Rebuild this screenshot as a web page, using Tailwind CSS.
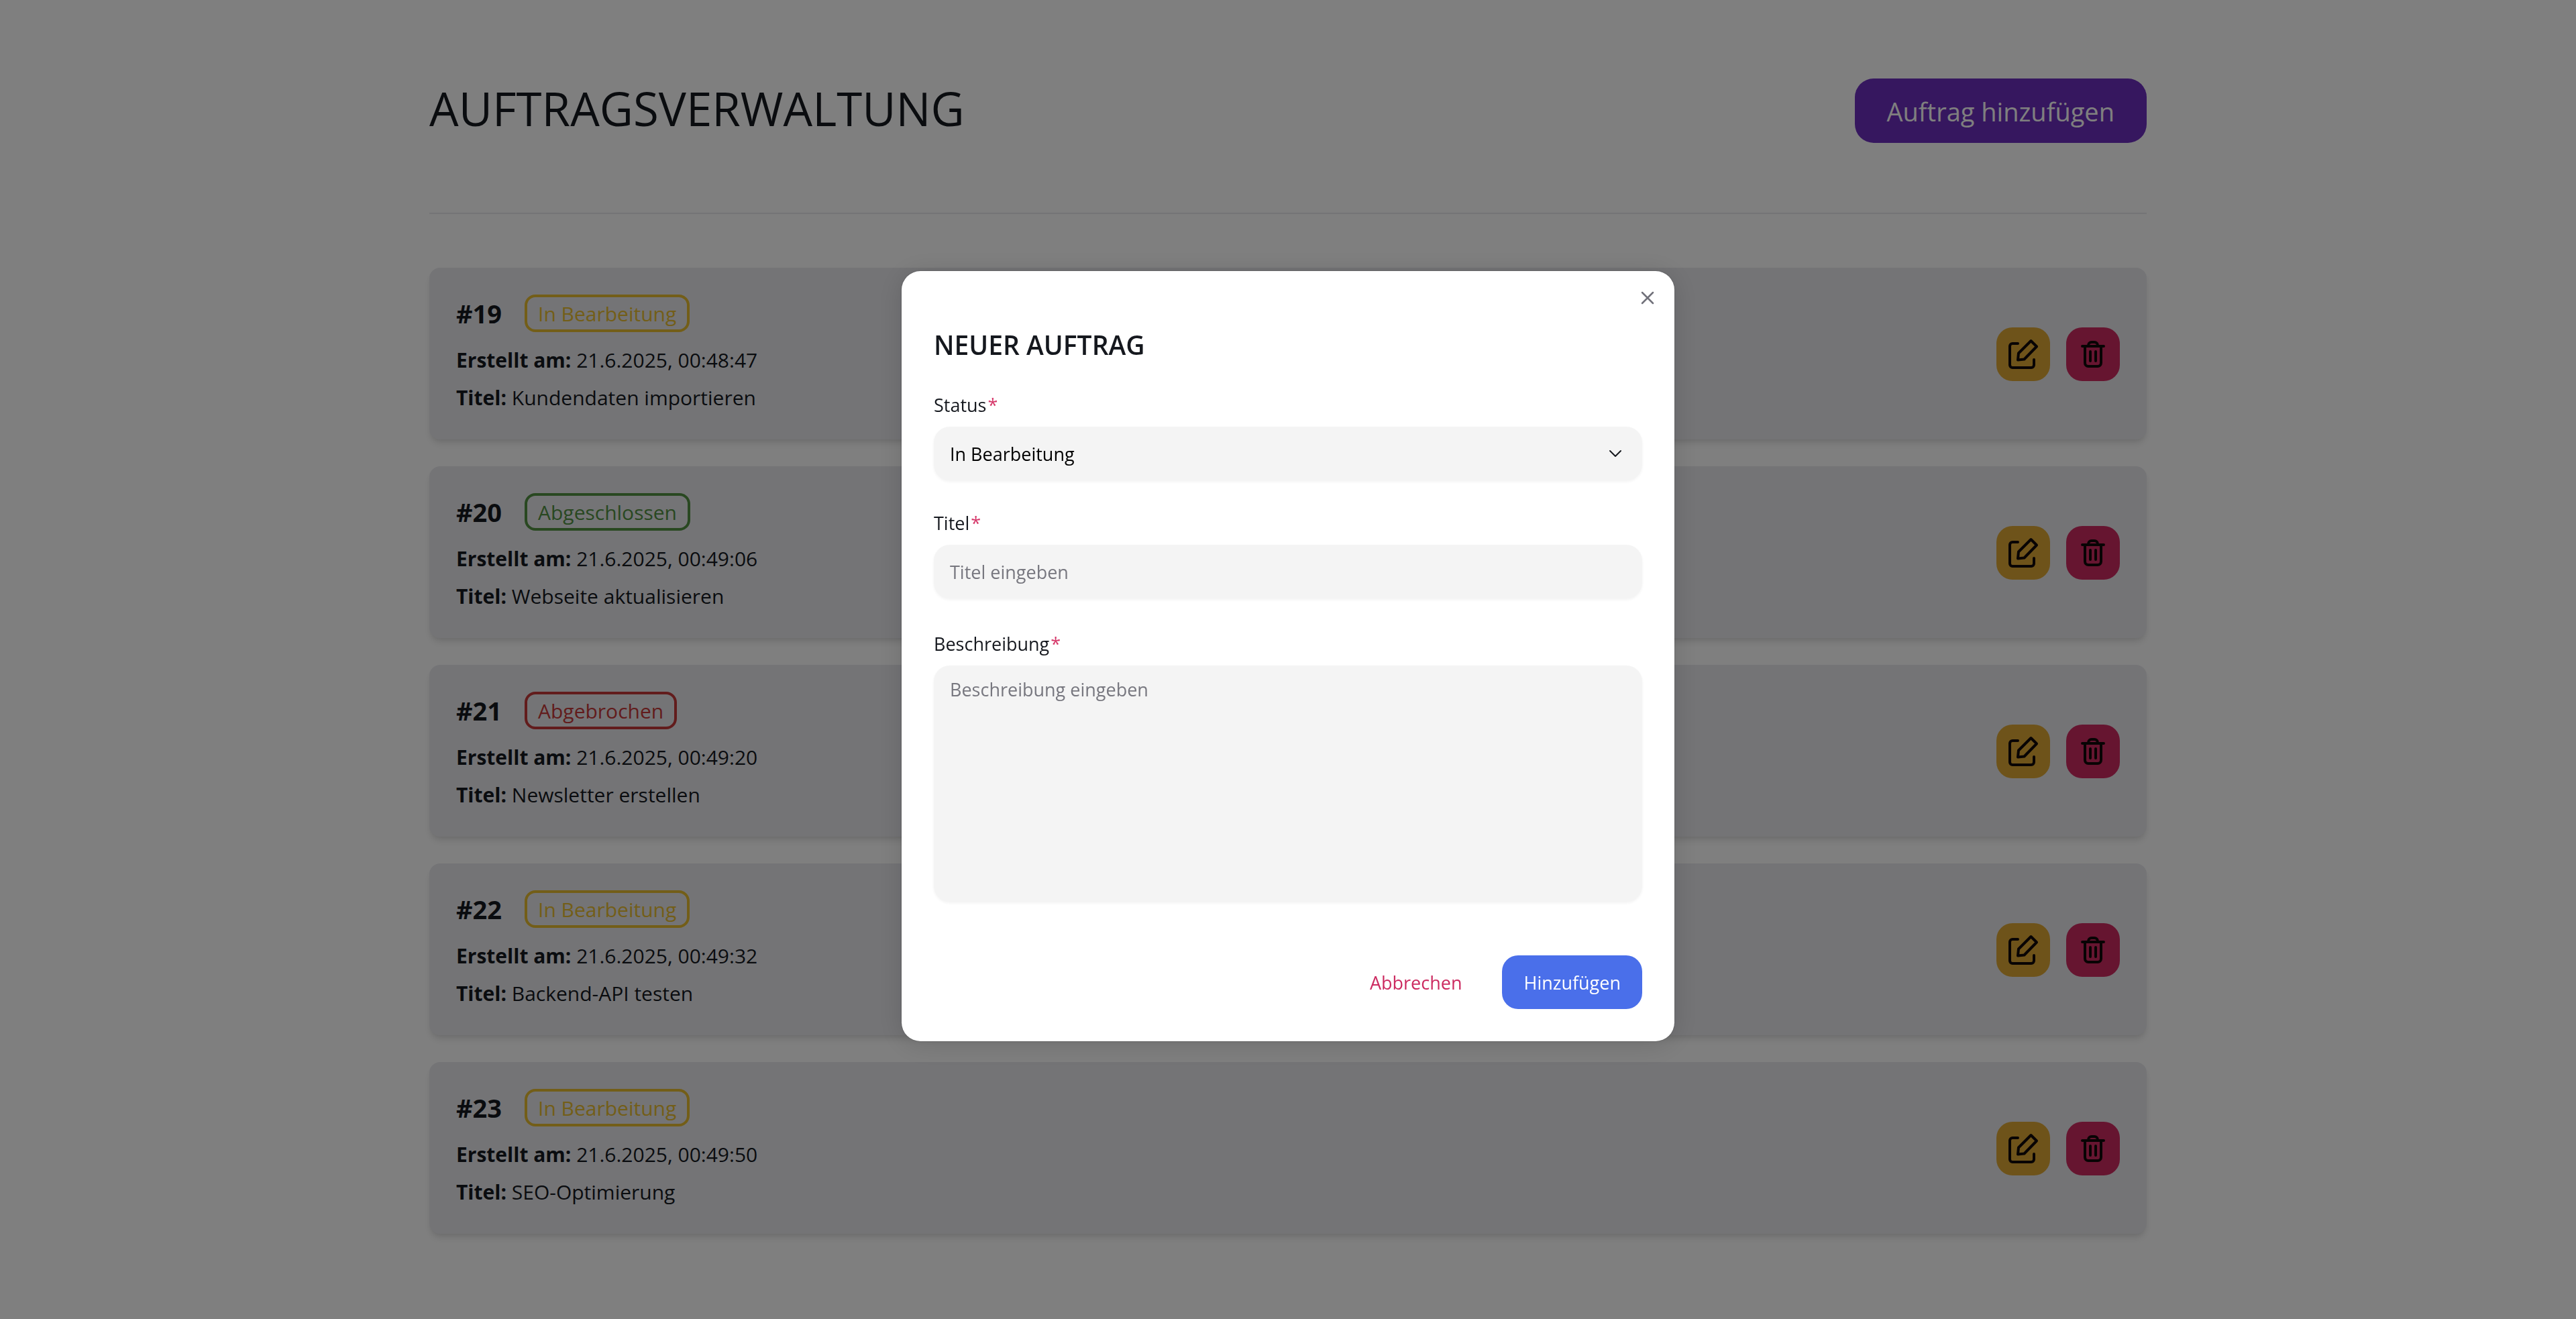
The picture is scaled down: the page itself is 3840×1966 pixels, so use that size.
<!DOCTYPE html>
<html lang="de">
<head>
<meta charset="utf-8">
<meta name="viewport" content="width=device-width, initial-scale=1">
<title>Auftragsverwaltung</title>
<script src="https://cdn.jsdelivr.net/npm/@tailwindcss/browser@4"></script>
</head>
<body class="bg-white font-['Open_Sans','Noto_Sans',sans-serif] text-[#15181e]">

<svg class="hidden" aria-hidden="true">
  <symbol id="edit" viewBox="0 0 80 80">
    <g fill="none" stroke="currentColor" stroke-width="4" stroke-linecap="round" stroke-linejoin="round">
      <path d="M32 24H24a4 4 0 0 0-4 4v28a4 4 0 0 0 4 4h28a4 4 0 0 0 4-4v-8"/>
      <path d="M51.5 20L60 28.500L41.500 47.500L32 48.500L33 38.500Z"/>
    </g>
  </symbol>
  <symbol id="trash" viewBox="0 0 80 80">
    <g fill="none" stroke="currentColor" stroke-width="4" stroke-linecap="round" stroke-linejoin="round">
      <path d="M24 28h32M28 28v25a5 5 0 0 0 5 5h14a5 5 0 0 0 5-5V28M33 27c0-3 2-5 5-5h4c3 0 5 2 5 5M36 36v14M44 36v14"/>
    </g>
  </symbol>
</svg>

<div class="mx-auto min-h-screen w-full max-w-[2560px] pb-24">
  <header class="flex items-center justify-between border-b-2 border-[#e8e8ed] pt-[117px] pb-[104px]">
    <h1 class="pb-2 text-[69px] leading-[80px]">AUFTRAGSVERWALTUNG</h1>
    <button type="button" class="h-24 rounded-[28px] bg-[#6c2ebe] px-12 pt-0.5 text-[38px] text-white">Auftrag hinzufügen</button>
  </header>

  <main id="orders" class="mt-20 flex flex-col gap-10"></main>
</div>

<template id="order">
  <article class="flex items-center justify-between rounded-2xl bg-[#e8e8ed] px-10 pt-10 pb-[38px] text-[30px] shadow-[0_8px_12px_-2px_rgba(0,0,0,0.1),0_4px_8px_-4px_rgba(0,0,0,0.1)]">
    <div>
      <div class="flex items-center gap-[34px]">
        <h2 class="text-[38px] leading-[56px] font-bold"></h2>
        <span data-badge class="flex h-14 items-center rounded-2xl border-4 px-4"></span>
      </div>
      <p class="mt-[18px] leading-[48px]"><strong class="font-bold">Erstellt am:</strong> <span data-date></span></p>
      <p class="mt-2 leading-[48px]"><strong class="font-bold">Titel:</strong> <span data-title></span></p>
    </div>
    <div class="flex gap-6 text-[#100808]">
      <button type="button" aria-label="Bearbeiten" class="size-20 rounded-3xl bg-[#dca634]"><svg class="size-20"><use href="#edit"/></svg></button>
      <button type="button" aria-label="Löschen" class="size-20 rounded-3xl bg-[#cc2a60]"><svg class="size-20"><use href="#trash"/></svg></button>
    </div>
  </article>
</template>

<div class="fixed inset-0 flex items-center justify-center bg-black/50 pb-2.5">
  <section role="dialog" aria-modal="true" aria-labelledby="dialog-title" class="relative w-full max-w-6xl rounded-[28px] bg-white px-12 pt-[82px] pb-12 text-[27px] shadow-[0_4px_40px_rgba(0,0,0,0.14),0_0_2px_rgba(0,0,0,0.3)]">
    <button type="button" aria-label="Schließen" class="absolute top-4 right-4 flex size-12 items-center justify-center text-[#71717a]">
      <svg class="size-6" viewBox="0 0 24 24" fill="none" stroke="currentColor" stroke-width="2.500" stroke-linecap="round"><path d="M4 4l16 16M20 4L4 20"/></svg>
    </button>
    <h2 id="dialog-title" class="text-[39px] leading-[56px] font-semibold">NEUER AUFTRAG</h2>
    <form class="mt-11">
      <label for="status" class="mb-[14px] block leading-9">Status<span class="ml-0.5 text-[#d6386a]">*</span></label>
      <div class="relative">
        <select id="status" class="h-20 w-full appearance-none rounded-3xl bg-[#f4f4f4] px-6 pt-0.5 text-black shadow-[0_2px_4px_rgba(0,0,0,0.05)]">
          <option>In Bearbeitung</option>
          <option>Abgeschlossen</option>
          <option>Abgebrochen</option>
        </select>
        <svg class="pointer-events-none absolute top-6 right-6 size-8" viewBox="0 0 32 32" fill="none" stroke="currentColor" stroke-width="2" stroke-linecap="round" stroke-linejoin="round"><path d="M8 12l8 8 8-8"/></svg>
      </div>
      <label for="titel" class="mt-[46px] mb-[14px] block leading-9">Titel<span class="ml-0.5 text-[#d6386a]">*</span></label>
      <input id="titel" type="text" placeholder="Titel eingeben" class="block h-20 w-full rounded-3xl bg-[#f4f4f4] px-6 shadow-[0_2px_4px_rgba(0,0,0,0.05)] placeholder:text-[#77777f]">
      <label for="beschreibung" class="mt-[50px] mb-[14px] block leading-9">Beschreibung<span class="ml-0.5 text-[#d6386a]">*</span></label>
      <textarea id="beschreibung" placeholder="Beschreibung eingeben" class="block h-[352px] w-full resize-none rounded-3xl bg-[#f4f4f4] px-6 py-4 leading-10 shadow-[0_2px_4px_rgba(0,0,0,0.05)] placeholder:text-[#77777f]"></textarea>
      <div class="mt-20 flex justify-end gap-7">
        <button type="button" class="h-20 rounded-3xl px-8 pt-0.5 text-[#cc2a60]">Abbrechen</button>
        <button type="submit" class="h-20 rounded-3xl bg-[#4a6fea] px-8 pt-0.5 text-white">Hinzufügen</button>
      </div>
    </form>
  </section>
</div>

<script>
  const badges = {
    'In Bearbeitung': ['border-[#e6bc30]', 'text-[#e6bc30]'],
    'Abgeschlossen': ['border-[#529042]', 'text-[#529042]'],
    'Abgebrochen': ['border-[#c43838]', 'text-[#c43838]'],
  };
  const orders = [
    [19, 'In Bearbeitung', '21.6.2025, 00:48:47', 'Kundendaten importieren'],
    [20, 'Abgeschlossen', '21.6.2025, 00:49:06', 'Webseite aktualisieren'],
    [21, 'Abgebrochen', '21.6.2025, 00:49:20', 'Newsletter erstellen'],
    [22, 'In Bearbeitung', '21.6.2025, 00:49:32', 'Backend-API testen'],
    [23, 'In Bearbeitung', '21.6.2025, 00:49:50', 'SEO-Optimierung'],
  ];
  for (const [id, status, date, title] of orders) {
    const node = document.getElementById('order').content.cloneNode(true);
    node.querySelector('h2').textContent = '#' + id;
    const badge = node.querySelector('[data-badge]');
    badge.textContent = status;
    badge.classList.add(...badges[status]);
    node.querySelector('[data-date]').textContent = date;
    node.querySelector('[data-title]').textContent = title;
    document.getElementById('orders').append(node);
  }
</script>
</body>
</html>
